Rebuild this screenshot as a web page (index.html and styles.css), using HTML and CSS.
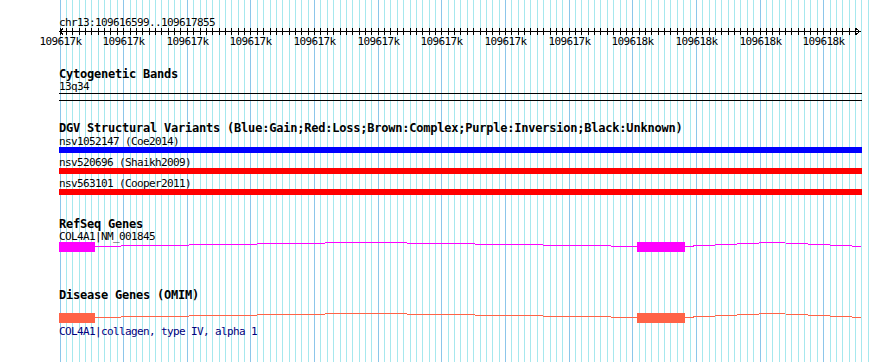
FILE: index.html
```html
<!DOCTYPE html>
<html>
<head>
    <meta charset="UTF-8">
    <title>chr13:109616599..109617855</title>
    <link rel="stylesheet" href="styles.css">
</head>
<body>

    <div class="panel">
        <svg class="grid" id="grid" width="890" height="362"></svg>

        <div class="tracks">
            <div class="seg-name">chr13:109616599..109617855</div>
            <svg class="ruler" id="ruler" width="803" height="18">
                <line x1="1" y1="3.5" x2="801" y2="3.5" stroke="#000" />
                <polyline points="4,0.5 1,3.5 4,6.5" fill="none" stroke="#000" />
                <polyline points="797,0.5 801,3.5 797,6.5" fill="none" stroke="#000" />
            </svg>

            <div class="track cyto">
                <div class="track-title">Cytogenetic Bands</div>
                <div class="feature-label gap-1">13q34</div>
                <div class="band"></div>
            </div>

            <div class="track dgv">
                <div class="track-title">DGV Structural Variants (Blue:Gain;Red:Loss;Brown:Complex;Purple:Inversion;Black:Unknown)</div>
                <div class="variant first">
                    <div class="feature-label">nsv1052147 (Coe2014)</div>
                    <div class="bar gain"></div>
                </div>
                <div class="variant">
                    <div class="feature-label">nsv520696 (Shaikh2009)</div>
                    <div class="bar loss"></div>
                </div>
                <div class="variant">
                    <div class="feature-label">nsv563101 (Cooper2011)</div>
                    <div class="bar loss"></div>
                </div>
            </div>

            <div class="track refseq">
                <div class="track-title">RefSeq Genes</div>
                <div class="feature-label gap-1">COL4A1|NM_001845</div>
                <svg class="gene" width="803" height="10">
                    <rect x="0" y="0" width="36" height="10" />
                    <rect x="578" y="0" width="48" height="10" />
                    <polyline points="36,4.4 307,0.4 578,4.4" />
                    <polyline points="626,4.4 713,0.4 802,4.4" />
                </svg>
            </div>

            <div class="track omim">
                <div class="track-title">Disease Genes (OMIM)</div>
                <svg class="gene disease" width="803" height="10">
                    <rect x="0" y="0" width="36" height="10" />
                    <rect x="578" y="0" width="48" height="10" />
                    <polyline points="36,4.4 307,0.4 578,4.4" />
                    <polyline points="626,4.4 713,0.4 802,4.4" />
                </svg>
                <div class="feature-label description">COL4A1|collagen, type IV, alpha 1</div>
            </div>
        </div>
    </div>

    <script>
        const NS = 'http://www.w3.org/2000/svg';
        const start = 109616600; // first 10bp step after 109616599
        const pxPer10bp = 10 * 800 / 1257;
        const trackLeft = 59;

        function el(name, attrs) {
            const node = document.createElementNS(NS, name);
            for (const key in attrs) node.setAttribute(key, attrs[key]);
            return node;
        }

        function drawGrid() {
            const grid = document.getElementById('grid');
            for (let k = 0; k <= 127; k++) {
                const x = Math.floor(60 + k * pxPer10bp) + 0.5;
                grid.appendChild(el('line', {
                    x1: x, y1: 0, x2: x, y2: 362,
                    class: k % 10 === 0 ? 'major' : 'minor'
                }));
            }
        }

        function drawRuler() {
            const ruler = document.getElementById('ruler');
            for (let k = 0; k <= 125; k++) {
                const x = Math.floor(60 + k * pxPer10bp) - trackLeft + 0.5;
                ruler.appendChild(el('line', { x1: x, y1: 0, x2: x, y2: 7, stroke: '#000' }));
                if (k % 10 === 0) {
                    const label = el('text', { x: x, y: 17, 'text-anchor': 'middle' });
                    label.textContent = Math.round((start + k * 10) / 1000) + 'k';
                    ruler.appendChild(label);
                }
            }
        }

        drawGrid();
        drawRuler();
    </script>

</body>
</html>
```

FILE: styles.css
```css
body {
    margin: 0;
    background-color: #ffffff;
}
.panel {
    position: relative;
    width: 890px;
    height: 362px;
    overflow: hidden;
    font-family: "DejaVu Sans Mono", "Liberation Mono", monospace;
    color: #000;
}
.grid {
    position: absolute;
    left: 0;
    top: 0;
    shape-rendering: crispEdges;
}
.grid .minor {
    stroke: #a6e8ee;
}
.grid .major {
    stroke: #8cc6ea;
}
.tracks {
    position: relative;
    padding: 17px 0 0 59px;
}
.seg-name {
    font-size: 11px;
    line-height: 11px;
    height: 11px;
    letter-spacing: -0.62px;
    white-space: nowrap;
}
.ruler {
    display: block;
    overflow: visible;
    shape-rendering: crispEdges;
}
.ruler text {
    font-family: "DejaVu Sans Mono", "Liberation Mono", monospace;
    font-size: 11px;
    letter-spacing: -0.62px;
    fill: #000;
}
.track-title {
    font-size: 12px;
    font-weight: bold;
    line-height: 12px;
    height: 12px;
    letter-spacing: -0.22px;
    white-space: nowrap;
}
.feature-label {
    font-size: 11px;
    line-height: 11px;
    height: 11px;
    letter-spacing: -0.62px;
    white-space: nowrap;
}
.gap-1 {
    margin-top: 1px;
}

/* track spacing */
.cyto {
    margin-top: 22px;
}
.dgv {
    margin-top: 21px;
}
.refseq {
    margin-top: 23px;
}
.omim {
    margin-top: 37px;
}

.band {
    width: 803px;
    height: 6px;
    margin-top: 1px;
    border-top: 1px solid #000;
    border-bottom: 1px solid #000;
}
.variant {
    margin-top: 4px;
}
.variant.first {
    margin-top: 2px;
}
.bar {
    width: 803px;
    height: 6px;
}
.bar.gain {
    background-color: #0000ff;
}
.bar.loss {
    background-color: #ff0000;
}
.gene {
    display: block;
    shape-rendering: crispEdges;
    fill: #ff00ff;
    stroke: #ff00ff;
}
.gene rect {
    stroke: none;
}
.gene polyline {
    fill: none;
    stroke-width: 1;
}
.gene.disease {
    margin-top: 12px;
    fill: #ff6347;
    stroke: #ff6347;
}
.description {
    margin-top: 3px;
    color: #000080;
}
```
